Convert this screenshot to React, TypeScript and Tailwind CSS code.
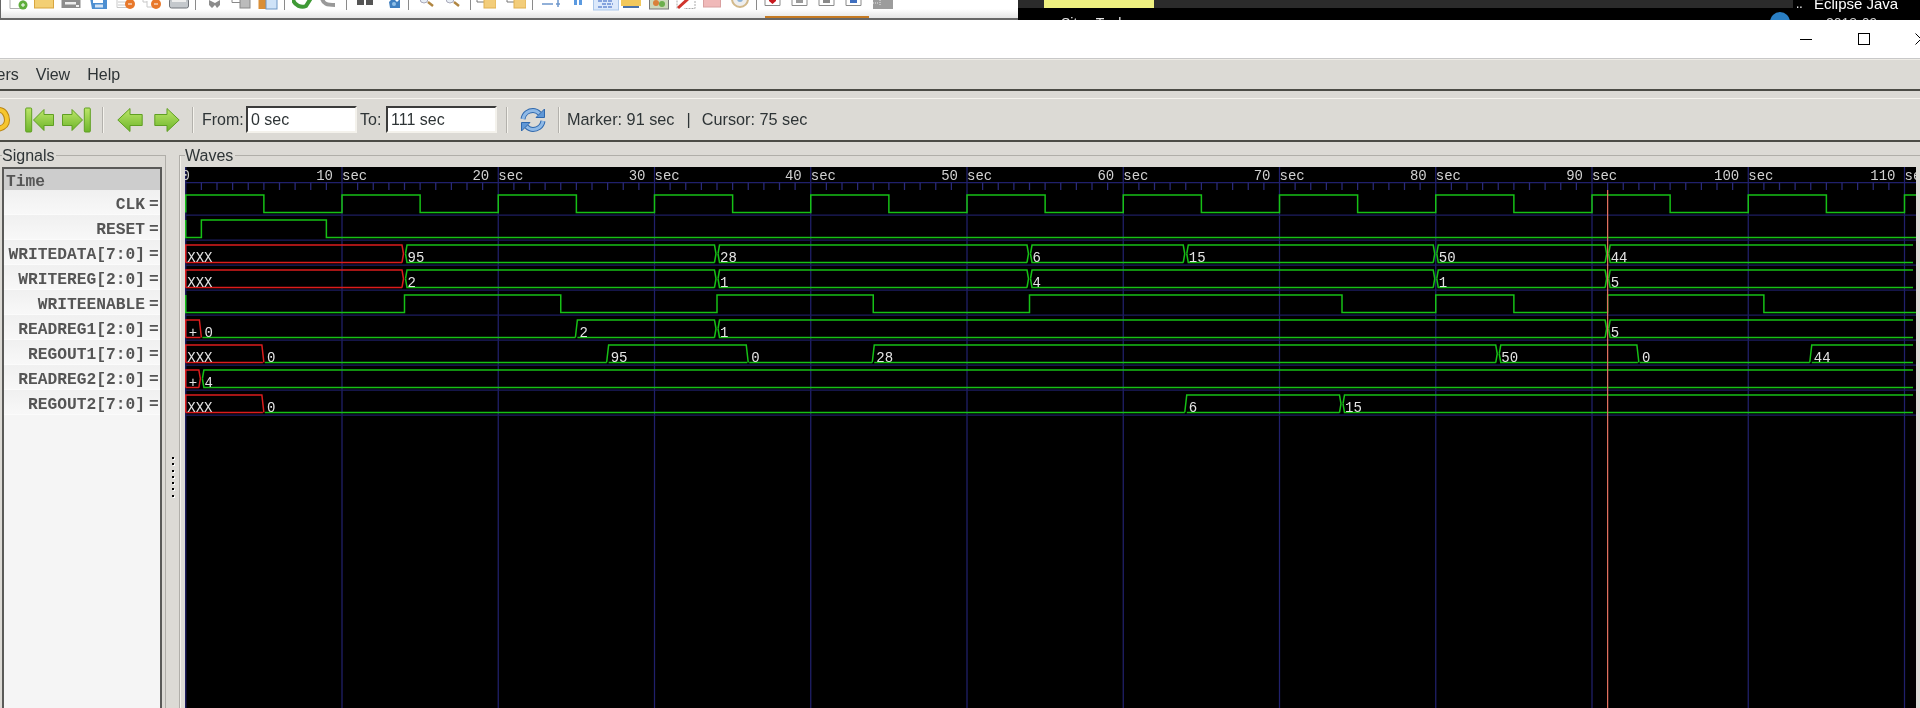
import { ReactNode } from 'react'

const mono = '[font-family:"Liberation_Mono",monospace]'
const W = 1731
const X = (t: number) => 0.75 + t * 15.625
const GREEN = '#16c016'
const RED = '#dc1c1c'

type Seg = [number, string]

const rows: { name: string; bits?: number[]; segs?: Seg[] }[] = [
  { name: 'CLK', bits: [5, 10, 15, 20, 25, 30, 35, 40, 45, 50, 55, 60, 65, 70, 75, 80, 85, 90, 95, 100, 105, 110] },
  { name: 'RESET', bits: [0, 1, 9] },
  { name: 'WRITEDATA[7:0]', segs: [[0, 'XXX'], [14, '95'], [34, '28'], [54, '6'], [64, '15'], [80, '50'], [91, '44']] },
  { name: 'WRITEREG[2:0]', segs: [[0, 'XXX'], [14, '2'], [34, '1'], [54, '4'], [80, '1'], [91, '5']] },
  { name: 'WRITEENABLE', bits: [0, 14, 24, 34, 44, 54, 74, 80, 85, 91, 101] },
  { name: 'READREG1[2:0]', segs: [[0, '+'], [1, '0'], [25, '2'], [34, '1'], [91, '5']] },
  { name: 'REGOUT1[7:0]', segs: [[0, 'XXX'], [5, '0'], [27, '95'], [36, '0'], [44, '28'], [84, '50'], [93, '0'], [104, '44']] },
  { name: 'READREG2[2:0]', segs: [[0, '+'], [1, '4']] },
  { name: 'REGOUT2[7:0]', segs: [[0, 'XXX'], [5, '0'], [64, '6'], [74, '15']] },
]

// bits holds the toggle times; a leading 0 means the signal starts low
function BitWave({ times, top, bot }: { times: number[]; top: number; bot: number }) {
  const startsHigh = times[0] !== 0
  let level = startsHigh
  let d = `M${X(0)} ${startsHigh ? bot : top} L${X(0)} ${startsHigh ? top : bot}`
  for (const t of times) {
    if (t === 0) continue
    d += ` L${X(t)} ${level ? top : bot}`
    level = !level
    d += ` L${X(t)} ${level ? top : bot}`
  }
  d += ` L${W} ${level ? top : bot}`
  return <path d={d} fill="none" stroke={GREEN} strokeWidth={1.5} />
}

function VectorWave({ segs, top, bot }: { segs: Seg[]; top: number; bot: number }) {
  const mid = (top + bot) / 2
  return (
    <>
      {segs.map(([t, v], i) => {
        const next = segs[i + 1]
        const prev = segs[i - 1]
        const x0 = X(t)
        const x1 = next ? X(next[0]) : W - 3
        const bad = v === 'XXX' || v === '+'
        const color = bad ? RED : GREEN
        let d = ''
        if (v === '0') {
          d = `M${x0 + 1} ${bot} L${next ? x1 - 1 : x1} ${bot}`
        } else {
          const toZero = next?.[1] === '0'
          const fromZero = prev?.[1] === '0'
          const left = !prev
            ? `M${x0} ${bot} L${x0} ${top}`
            : fromZero
              ? `M${x0 - 1} ${bot} L${x0 + 1} ${top}`
              : `M${x0 + 1} ${mid} L${x0 + 2.5} ${top}`
          const right = !next
            ? `L${x1} ${top}`
            : toZero
              ? `L${x1 - 2} ${top} L${x1} ${bot}`
              : `L${x1 - 2.5} ${top} L${x1 - 1} ${mid} L${x1 - 2.5} ${bot}`
          const backEnd = !next ? x1 : toZero ? x1 - 1 : x1 - 2.5
          const backStart = !prev ? x0 : fromZero ? x0 + 1 : x0 + 2.5
          d = `${left} ${right} M${backEnd} ${bot} L${backStart} ${bot}`
          if (prev && !fromZero) d += ` L${x0 + 1} ${mid}`
        }
        return (
          <g key={i}>
            <path d={d} fill="none" stroke={color} strokeWidth={1.5} />
            <text
              x={v === '+' ? x0 + 3 : i === 0 ? x0 + 1.5 : x0 + 3}
              y={bot - 1}
              fontFamily="Liberation Mono, monospace"
              fontSize={14}
              fill="#e4e4e4"
            >
              {v}
            </text>
          </g>
        )
      })}
    </>
  )
}

function WaveCanvas() {
  const ticks = Array.from({ length: 112 }, (_, i) => i)
  return (
    <svg className="block" width={W} height={541} viewBox="0 0 1731 541">
      <rect width={W} height={541} fill="#000" />
      <line x1={0} y1={15.5} x2={W} y2={15.5} stroke="#20206c" strokeWidth={1.25} />
      {ticks.map((t) =>
        t % 10 === 0 ? (
          <line key={t} x1={X(t)} y1={0} x2={X(t)} y2={541} stroke="#20206c" strokeWidth={1.25} />
        ) : (
          <line key={t} x1={X(t)} y1={15.5} x2={X(t)} y2={23} stroke="#2a2a78" strokeWidth={1.25} />
        ),
      )}
      {rows.map((_, i) => (
        <line key={i} x1={0} y1={48 + 25 * i} x2={W} y2={48 + 25 * i} stroke="#1c1c60" strokeWidth={1.25} />
      ))}
      <g fontFamily="Liberation Mono, monospace" fontSize={14} fill="#d0d0d0">
        <text x={5} y={12.5} textAnchor="end">0</text>
        {ticks
          .filter((t) => t % 10 === 0 && t > 0)
          .map((t) => (
            <g key={t}>
              <text x={X(t) - 9} y={12.5} textAnchor="end">{t}</text>
              <text x={X(t)} y={12.5}>sec</text>
            </g>
          ))}
      </g>
      {rows.map((r, i) => {
        const top = 28 + 25 * i
        const bot = 45.5 + 25 * i
        return r.bits ? (
          <BitWave key={r.name} times={r.bits} top={top} bot={bot} />
        ) : (
          <VectorWave key={r.name} segs={r.segs!} top={top} bot={bot} />
        )
      })}
      <line x1={X(91)} y1={23} x2={X(91)} y2={541} stroke="#e0705f" strokeWidth={1.25} />
    </svg>
  )
}

function GreenGrad({ id }: { id: string }) {
  return (
    <defs>
      <linearGradient id={id} x1="0" y1="0" x2="0" y2="1">
        <stop offset="0" stopColor="#bde66a" />
        <stop offset="1" stopColor="#6db52a" />
      </linearGradient>
    </defs>
  )
}

function SkipLeft() {
  return (
    <svg width="29" height="26" viewBox="0 0 29 26" className="shrink-0">
      <GreenGrad id="gs1" />
      <rect x="0.7" y="1" width="6" height="24" rx="1" fill="url(#gs1)" stroke="#5f9f22" />
      <path d="M8.5 13 L19 2.5 L19 7.5 L28.5 7.5 L28.5 18.5 L19 18.5 L19 23.5 Z" fill="url(#gs1)" stroke="#5f9f22" strokeLinejoin="round" />
    </svg>
  )
}

function SkipRight() {
  return (
    <svg width="29" height="26" viewBox="0 0 29 26" className="shrink-0 -scale-x-100">
      <GreenGrad id="gs2" />
      <rect x="0.7" y="1" width="6" height="24" rx="1" fill="url(#gs2)" stroke="#5f9f22" />
      <path d="M8.5 13 L19 2.5 L19 7.5 L28.5 7.5 L28.5 18.5 L19 18.5 L19 23.5 Z" fill="url(#gs2)" stroke="#5f9f22" strokeLinejoin="round" />
    </svg>
  )
}

function ArrowGreen({ flip }: { flip?: boolean }) {
  const id = flip ? 'ga2' : 'ga1'
  return (
    <svg width="26" height="26" viewBox="0 0 26 26" className={flip ? 'shrink-0 -scale-x-100' : 'shrink-0'}>
      <GreenGrad id={id} />
      <path d="M0.8 13 L13 1.5 L13 7.5 L25.2 7.5 L25.2 18.5 L13 18.5 L13 24.5 Z" fill={`url(#${id})`} stroke="#5f9f22" strokeLinejoin="round" />
    </svg>
  )
}

function UndoIcon() {
  return (
    <svg width="10" height="26" viewBox="0 0 10 26" className="shrink-0">
      <path d="M-8 3 L-1 3 C4 3 7 8 7 13 C7 19 3 21 -3 22" fill="none" stroke="#b98512" strokeWidth="6" />
      <path d="M-8 3 L-1 3 C4 3 7 8 7 13 C7 19 3 21 -3 22" fill="none" stroke="#f6c62e" strokeWidth="4" />
    </svg>
  )
}

function RefreshIcon() {
  const a = 'M3 12 C4 6 9 3.5 13 3.5 C16 3.5 18 5 19.5 6.5 M23 14 C22 20 17 22.5 13 22.5 C10 22.5 8 21 6.5 19.5'
  return (
    <svg width="26" height="26" viewBox="0 0 26 26" className="shrink-0">
      <path d={a} fill="none" stroke="#2f68ad" strokeWidth="5" />
      <path d={a} fill="none" stroke="#8fb9e6" strokeWidth="3" />
      <path d="M16 10.5 L24.5 10.5 L24.5 2 Z" fill="#5f97d6" stroke="#2f68ad" strokeLinejoin="round" />
      <path d="M10 15.5 L1.5 15.5 L1.5 24 Z" fill="#5f97d6" stroke="#2f68ad" strokeLinejoin="round" />
    </svg>
  )
}

function Sep({ className }: { className: string }) {
  return <div className={`h-[26px] w-[2px] shrink-0 border-l border-[#b3b1ac] bg-[#f4f2ec] ${className}`} />
}

function TopSep({ className }: { className: string }) {
  return <div className={`h-[10px] w-px shrink-0 bg-[#8a8a8a] ${className}`} />
}

function Glyph({ className, children }: { className: string; children: ReactNode }) {
  return (
    <svg width="20" height="10" viewBox="0 0 20 10" className={`shrink-0 ${className}`}>
      {children}
    </svg>
  )
}

const doc = <path d="M1 -2 L1 8.5 L14 8.5 L14 -2" fill="#fff" stroke="#b0b0b0" />
const boxed = (fill: string) => (
  <>
    <path d="M1 -2 L1 5.5 L16 5.5 L16 -2" fill="#fff" stroke="#8a8a8a" />
    <rect x="5" y="-2" width="7" height="5" fill={fill} />
  </>
)

function TopIcons() {
  return (
    <div className="flex h-[10px] shrink-0 items-start">
      <Glyph className="ml-[8px]">{doc}<circle cx="14" cy="5" r="4.5" fill="#5fae3c" /><path d="M12 5 h4 M14 3 v4" stroke="#fff" /></Glyph>
      <Glyph className="ml-[5px]"><rect x="0.5" y="-2" width="19" height="10" fill="#f3cf74" stroke="#d8a53f" /></Glyph>
      <Glyph className="ml-[7px]"><rect x="0.5" y="-2" width="19" height="10" fill="#8c8c8c" /><rect x="4" y="2" width="11" height="2.5" fill="#eee" /><rect x="15" y="5" width="3" height="2" fill="#eee" /></Glyph>
      <Glyph className="ml-[8px]"><path d="M1 -2 L4 -2 L4 3 L14 3 L14 -2 L18 -2 L18 9 L3 9 Z" fill="#4d8fd1" /><rect x="6" y="4.5" width="8" height="3" fill="#d3e5f7" /></Glyph>
      <Glyph className="ml-[7px]"><path d="M1 -2 L1 7.5 L14 7.5" fill="#fff" stroke="#c8c8c8" /><path d="M2 2 h8 M2 5 h8" stroke="#c8c8c8" /><circle cx="14" cy="4" r="5" fill="#e8782a" /><path d="M12 4 h4" stroke="#fff" /></Glyph>
      <Glyph className="ml-[6px]"><path d="M1 -2 L1 2 L5 2 M5 1 L5 7 L12 7" fill="none" stroke="#c8c8c8" /><circle cx="14" cy="4" r="5" fill="#e8782a" /><path d="M12 4 h4" stroke="#fff" /></Glyph>
      <Glyph className="ml-[7px]"><rect x="0.5" y="-1" width="19" height="9" rx="2" fill="#c4c8cc" stroke="#70747a" /><rect x="3" y="-2" width="14" height="4" fill="#eee" /></Glyph>
      <TopSep className="ml-[6px]" />
      <Glyph className="ml-[10px]"><path d="M3 0 L9 3 L14 0 L14 5 L11 8 L9 5 L6 8 L3 5 Z" fill="#8c8c8c" /></Glyph>
      <Glyph className="ml-[5px]"><path d="M1 2.5 L9 2.5 M1 -2 L1 2.5" fill="none" stroke="#888" /><rect x="9" y="-2" width="10" height="10" fill="#bbb" stroke="#888" /></Glyph>
      <Glyph className="ml-[7px]"><rect x="0.5" y="-2" width="9" height="11" fill="#d98e36" /><rect x="8" y="-2" width="11" height="11" fill="#cfe3f8" stroke="#6d96c5" /></Glyph>
      <TopSep className="ml-[6px]" />
      <Glyph className="ml-[7px]"><path d="M1 -1 C2 6 10 8 14 6 L19 -2" fill="none" stroke="#3f9a36" strokeWidth="4" /></Glyph>
      <Glyph className="ml-[7px]"><path d="M3 -2 C4 4 8 5 16 5" fill="none" stroke="#999" strokeWidth="4" /></Glyph>
      <TopSep className="ml-[7px]" />
      <Glyph className="ml-[9px]"><rect x="1" y="-2" width="7" height="7" fill="#555" /><rect x="10" y="-2" width="7" height="7" fill="#555" /></Glyph>
      <Glyph className="ml-[9px]"><path d="M4 2 L8 -2 L12 2 L15 -1 L15 8 L5 8 Z" fill="#3f7fc0" /><circle cx="9" cy="4" r="2" fill="#8fc0e8" /></Glyph>
      <TopSep className="ml-[3px]" />
      <Glyph className="ml-[9px]"><circle cx="6" cy="-1" r="4" fill="#e8eef5" stroke="#aab" /><path d="M10 2 L15 6" stroke="#b08540" strokeWidth="2.5" /></Glyph>
      <Glyph className="ml-[6px]"><circle cx="6" cy="-1" r="4" fill="#e8eef5" stroke="#aab" /><path d="M10 2 L15 6" stroke="#b08540" strokeWidth="2.5" /></Glyph>
      <TopSep className="ml-[6px]" />
      <Glyph className="ml-[5px]"><path d="M1 -2 L1 2 L8 2" fill="none" stroke="#777" /><rect x="8" y="-1" width="12" height="9" fill="#f3cd7a" stroke="#e0b050" /></Glyph>
      <Glyph className="ml-[10px]"><path d="M1 -2 L1 2 L8 2" fill="none" stroke="#777" /><rect x="8" y="-1" width="12" height="9" fill="#f3cd7a" stroke="#e0b050" /></Glyph>
      <TopSep className="ml-[6px]" />
      <Glyph className="ml-[8px]"><path d="M1 4 H12 M15 4 H19 M17 -2 V7" stroke="#6e97cc" strokeWidth="1.5" fill="none" /></Glyph>
      <Glyph className="ml-[7px]"><rect x="6" y="-2" width="3" height="7" fill="#5b9ae0" /><rect x="11" y="-2" width="3" height="7" fill="#5b9ae0" /></Glyph>
      <svg width="26" height="11" viewBox="0 0 26 11" className="ml-[5px] shrink-0">
        <rect x="0.5" y="-1" width="25" height="11" fill="#dce9fb" stroke="#a9c6ea" />
        <path d="M5 1 H20 M9 4 H20 M5 7 H20" stroke="#2f5fc0" strokeWidth="1.2" strokeDasharray="4 1" />
      </svg>
      <Glyph className="ml-[2px]"><rect x="0" y="-2" width="20" height="8" fill="#f2c85c" /><rect x="2" y="6" width="16" height="2" fill="#4b72a8" /></Glyph>
      <Glyph className="ml-[8px]"><rect x="0.5" y="-2" width="19" height="11" fill="#cdd8bb" stroke="#777" /><circle cx="7" cy="3" r="3" fill="#d9803a" /><circle cx="13" cy="4" r="3" fill="#6caf4c" /></Glyph>
      <Glyph className="ml-[7px]"><path d="M1 8.5 L1 -2 M19 -2 L19 8.5 L8 8.5" stroke="#aaa" fill="none" strokeDasharray="2 1" /><path d="M2 8 L13 -2" stroke="#d0342c" strokeWidth="3" /></Glyph>
      <Glyph className="ml-[7px]"><rect x="0.5" y="-2" width="17" height="9" fill="#f0b9b9" stroke="#d9a0a0" /></Glyph>
      <Glyph className="ml-[7px]"><circle cx="10" cy="-1" r="8" fill="#eee" stroke="#d2b98b" strokeWidth="2" /><circle cx="10" cy="-1" r="3" fill="#8db4d8" /></Glyph>
      <TopSep className="ml-[6px]" />
      <Glyph className="ml-[7px]"><path d="M1 -2 L1 5.5 L16 5.5 L16 -2" fill="#fff" stroke="#8a8a8a" /><path d="M5 -2 H12 V1 L8.5 4 L5 1 Z" fill="#c8181e" /></Glyph>
      <Glyph className="ml-[7px]">{boxed('#9a9a9a')}</Glyph>
      <Glyph className="ml-[7px]">{boxed('#8a8a8a')}</Glyph>
      <Glyph className="ml-[7px]">{boxed('#3f6fc0')}</Glyph>
      <Glyph className="ml-[8px]"><rect x="0" y="-2" width="20" height="11" fill="#9c9c9c" /><path d="M0 3 h6 M7 0 v6" stroke="#e8e8e8" strokeDasharray="1 1" /></Glyph>
    </div>
  )
}

function TopStrip() {
  return (
    <div className="flex h-[20px] shrink-0 overflow-hidden">
      <div className="flex w-[1018px] shrink-0 flex-col border-b-2 border-l border-[#666] bg-gradient-to-b from-white via-white to-[#e4e4e4]">
        <TopIcons />
        <div className="mt-auto ml-[764px] h-[2px] w-[104px] bg-[#c57a22]" />
      </div>
      <div className="flex w-[775px] shrink-0 flex-col bg-black">
        <div className="h-[8px] shrink-0 bg-[#2b2b2b]">
          <div className="ml-[26px] h-full w-[110px] bg-[#eef080]" />
        </div>
        <div className="flex h-[20px] shrink-0 items-start justify-between text-[14px] leading-[20px] text-[#e8e8e8]">
          <span className="mt-[5px] ml-[43px]">Sites Tools</span>
          <span className="mt-[4px] mr-[3px] h-[20px] w-[20px] rounded-full bg-[#2a7fc4]" />
        </div>
      </div>
      <div className="flex flex-1 flex-col bg-black text-[15px] text-white">
        <div className="-mt-[6px] flex h-[20px] shrink-0 items-center leading-[20px]">
          <span className="ml-[3px] w-[18px] text-[12px]">..</span>
          <span>Eclipse Java</span>
        </div>
        <div className="ml-[33px] h-[18px] shrink-0 text-[14px] leading-[18px] text-[#cfcfcf]">2018-09</div>
      </div>
    </div>
  )
}

function TitleBar() {
  return (
    <div className="-mr-[7px] flex h-[39px] shrink-0 items-center justify-end border-b border-[#c8c8c8] bg-white">
      <div className="h-px w-[12px] bg-black" />
      <div className="ml-[46px] h-[12px] w-[12px] border border-black" />
      <svg width="12" height="12" viewBox="0 0 12 12" className="ml-[45px]">
        <path d="M0.5 0.5 L11.5 11.5 M11.5 0.5 L0.5 11.5" stroke="#000" />
      </svg>
    </div>
  )
}

function TimeInput({ value }: { value: string }) {
  return (
    <input
      readOnly
      value={value}
      className="h-[27px] w-[111px] shrink-0 border-2 border-t-[#3c3c3c] border-r-[#f4f2ec] border-b-[#f4f2ec] border-l-[#3c3c3c] bg-white pl-[3px] text-[16px] text-[#2e3436] outline-none"
    />
  )
}

function Toolbar() {
  return (
    <div className="flex h-[42px] shrink-0 items-center border-t border-[#f6f4ee] text-[16px] text-[#2e3436]">
      <UndoIcon />
      <div className="ml-[15px]"><SkipLeft /></div>
      <div className="ml-[8px]"><SkipRight /></div>
      <Sep className="ml-[11px]" />
      <div className="ml-[13px]"><ArrowGreen /></div>
      <div className="ml-[11px]"><ArrowGreen flip /></div>
      <Sep className="ml-[12px]" />
      <span className="ml-[8px] w-[44px] shrink-0">From:</span>
      <TimeInput value="0 sec" />
      <span className="ml-[3px] w-[26px] shrink-0">To:</span>
      <TimeInput value="111 sec" />
      <Sep className="ml-[9px]" />
      <div className="ml-[12px]"><RefreshIcon /></div>
      <Sep className="ml-[12px]" />
      <div className="ml-[7px] flex text-[16.25px]">
        <span>Marker: 91 sec</span>
        <span className="ml-[12px]">|</span>
        <span className="ml-[11px]">Cursor: 75 sec</span>
      </div>
    </div>
  )
}

function SignalList() {
  return (
    <div className={`h-full w-[160px] border-2 border-b-0 border-[#5a5a58] bg-[#f5f5f5] text-[16.25px] leading-none text-[#555] ${mono}`}>
      <div className="flex h-[21px] items-center bg-[#cdcdcd] pt-[6px] pl-[2px] font-bold">Time</div>
      {rows.map((r) => (
        <div key={r.name} className="flex h-[25px] items-center justify-end border-b border-[#fbfbfb] bg-gradient-to-b from-[#f0f0f0] to-[#f8f8f8] pt-[6px] font-bold">
          <span>{r.name}</span>
          <span className="ml-[4px] w-[11px] shrink-0">=</span>
        </div>
      ))}
    </div>
  )
}

function Legend({ children, className }: { children: ReactNode; className: string }) {
  return (
    <span className={`absolute -top-[9px] bg-[#dcdad5] pr-[2px] text-[16px] leading-[18px] text-[#2e3436] ${className}`}>
      {children}
    </span>
  )
}

function HandleDots() {
  return (
    <div className="flex w-[13px] shrink-0 flex-col items-center gap-[4.25px] pt-[302px]">
      {[0, 1, 2, 3, 4, 5, 6].map((i) => (
        <div key={i} className="h-[2px] w-[2px] bg-black shadow-[1px_1px_0_#fff]" />
      ))}
    </div>
  )
}

export default function App() {
  return (
    <div className="flex h-[708px] w-[1920px] flex-col overflow-hidden bg-[#dcdad5] blur-[0.35px] [font-family:'Liberation_Sans',sans-serif]">
      <TopStrip />
      <TitleBar />
      <div className="-ml-[39px] flex h-[32px] shrink-0 items-center gap-[17px] border-t border-b-2 border-t-[#eeece6] border-b-[#4c4c46] text-[16px] text-[#2e3436]">
        <span>Markers</span>
        <span>View</span>
        <span>Help</span>
      </div>
      <div className="h-[7px] shrink-0" />
      <Toolbar />
      <div className="h-[2px] shrink-0 bg-[#4c4c46]" />
      <div className="flex min-h-0 flex-1 pt-[13px]">
        <div className="relative h-full w-[166px] shrink-0 border-t border-r border-[#b0aea9] pt-[11px] pl-[2px]">
          <Legend className="left-[2px]">Signals</Legend>
          <SignalList />
        </div>
        <HandleDots />
        <div className="relative h-full min-w-0 flex-1 border-t border-l border-[#b0aea9] pt-[11px] pr-[4px] pl-[5px] [box-shadow:inset_1px_0_0_#f4f2ec]">
          <Legend className="left-[5px]">Waves</Legend>
          <WaveCanvas />
        </div>
      </div>
    </div>
  )
}
